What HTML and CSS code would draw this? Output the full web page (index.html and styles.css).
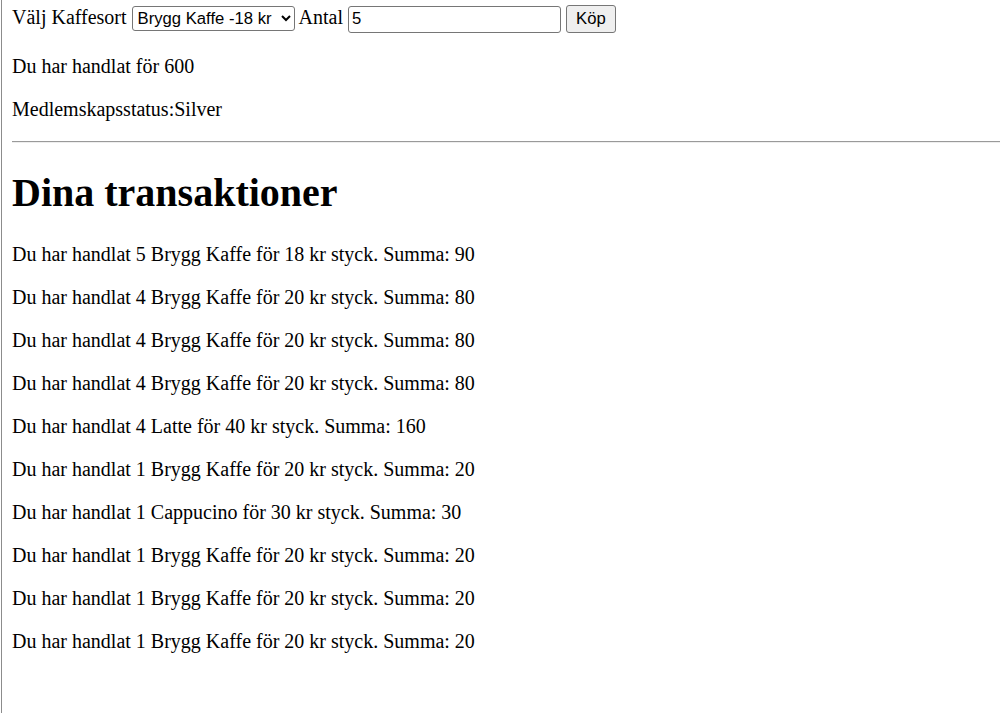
FILE: index.html
```html
<!DOCTYPE html>
<html lang="sv">
<head>
<meta charset="utf-8">
<title>Kaffe</title>
<link rel="stylesheet" href="styles.css">
</head>
<body>
<div class="frame">
  <div class="order">
    <label>Välj Kaffesort</label>
    <select class="sel">
      <option>Brygg Kaffe -18 kr</option>
      <option>Latte -40 kr</option>
      <option>Cappucino -30 kr</option>
    </select>
    <label>Antal</label>
    <input class="qty" type="text" value="5">
    <button class="buy">Köp</button>
  </div>
  <p>Du har handlat för 600</p>
  <p>Medlemskapsstatus:Silver</p>
  <hr class="rule">
  <h1>Dina transaktioner</h1>
  <p>Du har handlat 5 Brygg Kaffe för 18 kr styck. Summa: 90</p>
  <p>Du har handlat 4 Brygg Kaffe för 20 kr styck. Summa: 80</p>
  <p>Du har handlat 4 Brygg Kaffe för 20 kr styck. Summa: 80</p>
  <p>Du har handlat 4 Brygg Kaffe för 20 kr styck. Summa: 80</p>
  <p>Du har handlat 4 Latte för 40 kr styck. Summa: 160</p>
  <p>Du har handlat 1 Brygg Kaffe för 20 kr styck. Summa: 20</p>
  <p>Du har handlat 1 Cappucino för 30 kr styck. Summa: 30</p>
  <p>Du har handlat 1 Brygg Kaffe för 20 kr styck. Summa: 20</p>
  <p>Du har handlat 1 Brygg Kaffe för 20 kr styck. Summa: 20</p>
  <p>Du har handlat 1 Brygg Kaffe för 20 kr styck. Summa: 20</p>
</div>
</body>
</html>
```
FILE: styles.css
```css
html, body {
  margin: 0;
  padding: 0;
  background: #fff;
}
body {
  font-family: "Liberation Serif", "Times New Roman", serif;
  font-size: 20px;
  color: #000;
}
.frame {
  margin-left: 1px;
  border-left: 1px solid #8c8c8c;
  padding: 5px 8px 10px 10px;
  min-height: calc(100vh - 15px);
}
.order {
  line-height: 23px;
  padding-bottom: 2px;
}
.sel {
  font-family: "Liberation Sans", Arial, sans-serif;
  font-size: 16.67px;
  width: 163px;
  height: 25px;
  border: 1px solid #767676;
  border-radius: 3px;
  background: #fff;
  color: #000;
  padding: 0 0 0 1px;
}
.qty {
  font-family: "Liberation Sans", Arial, sans-serif;
  font-size: 16.67px;
  width: 213px;
  height: 27px;
  box-sizing: border-box;
  border: 1px solid #767676;
  border-radius: 3px;
  padding: 1px 3px;
  margin: 0;
}
.buy {
  font-family: "Liberation Sans", Arial, sans-serif;
  font-size: 16.67px;
  width: 50px;
  height: 28px;
  box-sizing: border-box;
  border: 1px solid #767676;
  border-radius: 3px;
  background: #efefef;
  color: #000;
  padding: 1px 7px;
  margin-left: 0;
}
p {
  margin: 20px 0;
  line-height: 23px;
}
.rule {
  border: none;
  border-top: 1px solid #9a9a9a;
  border-bottom: 1px solid #eee;
  margin: 10px 0;
}
h1 {
  font-size: 40px;
  line-height: 46px;
  margin: 27px 0;
  font-weight: bold;
}
```
